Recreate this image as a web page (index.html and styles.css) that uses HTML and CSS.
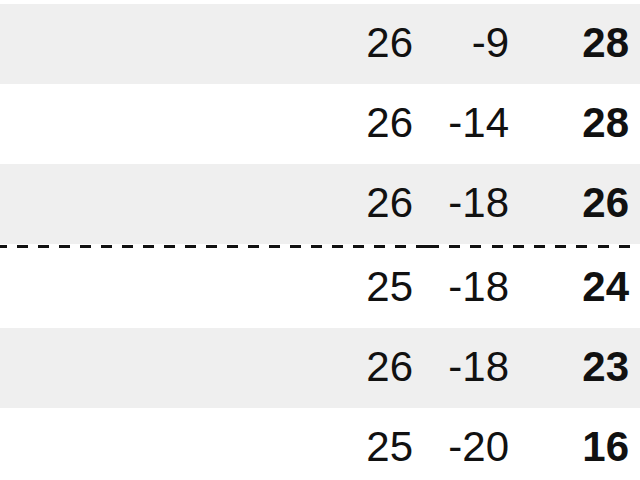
FILE: index.html
```html
<!DOCTYPE html>
<html>
<head>
<meta charset="utf-8">
<link rel="stylesheet" href="styles.css">
</head>
<body>
<div class="table">
  <div class="row shade"><span class="c1"></span><span class="c2">26</span><span class="c3">-9</span><span class="c4">28</span></div>
  <div class="row"><span class="c1"></span><span class="c2">26</span><span class="c3">-14</span><span class="c4">28</span></div>
  <div class="row shade"><span class="c1"></span><span class="c2">26</span><span class="c3">-18</span><span class="c4">26</span></div>
  <div class="sep"><span class="dash dash-left"></span><span class="dash dash-right"></span></div>
  <div class="row"><span class="c1"></span><span class="c2">25</span><span class="c3">-18</span><span class="c4">24</span></div>
  <div class="row shade"><span class="c1"></span><span class="c2">26</span><span class="c3">-18</span><span class="c4">23</span></div>
  <div class="row"><span class="c1"></span><span class="c2">25</span><span class="c3">-20</span><span class="c4">16</span></div>
</div>
</body>
</html>
```

FILE: styles.css
```css
html, body {
  margin: 0;
  padding: 0;
  background: #ffffff;
  overflow: hidden;
}
body {
  font-family: "Liberation Sans", Arial, sans-serif;
  color: #111111;
}
.table {
  padding-top: 4px;
  width: 640px;
}
.row {
  display: grid;
  grid-template-columns: 328px 85px 96px 120px;
  height: 80px;
  line-height: 78px;
  font-size: 42px;
}
.row.shade {
  background: #efefef;
}
.row span {
  text-align: right;
  white-space: nowrap;
}
.row .c4 {
  font-weight: bold;
}
.sep {
  display: flex;
  height: 4px;
  align-items: flex-end;
}
.dash {
  display: block;
  height: 3px;
}
.dash-left {
  width: 428px;
  background: repeating-linear-gradient(to right, #111 0, #111 11px, transparent 11px, transparent 21px);
  background-position: -4px 0;
}
.dash-right {
  flex: 1;
  background: repeating-linear-gradient(to right, #111 0, #111 11px, transparent 11px, transparent 21.2px);
}
```
